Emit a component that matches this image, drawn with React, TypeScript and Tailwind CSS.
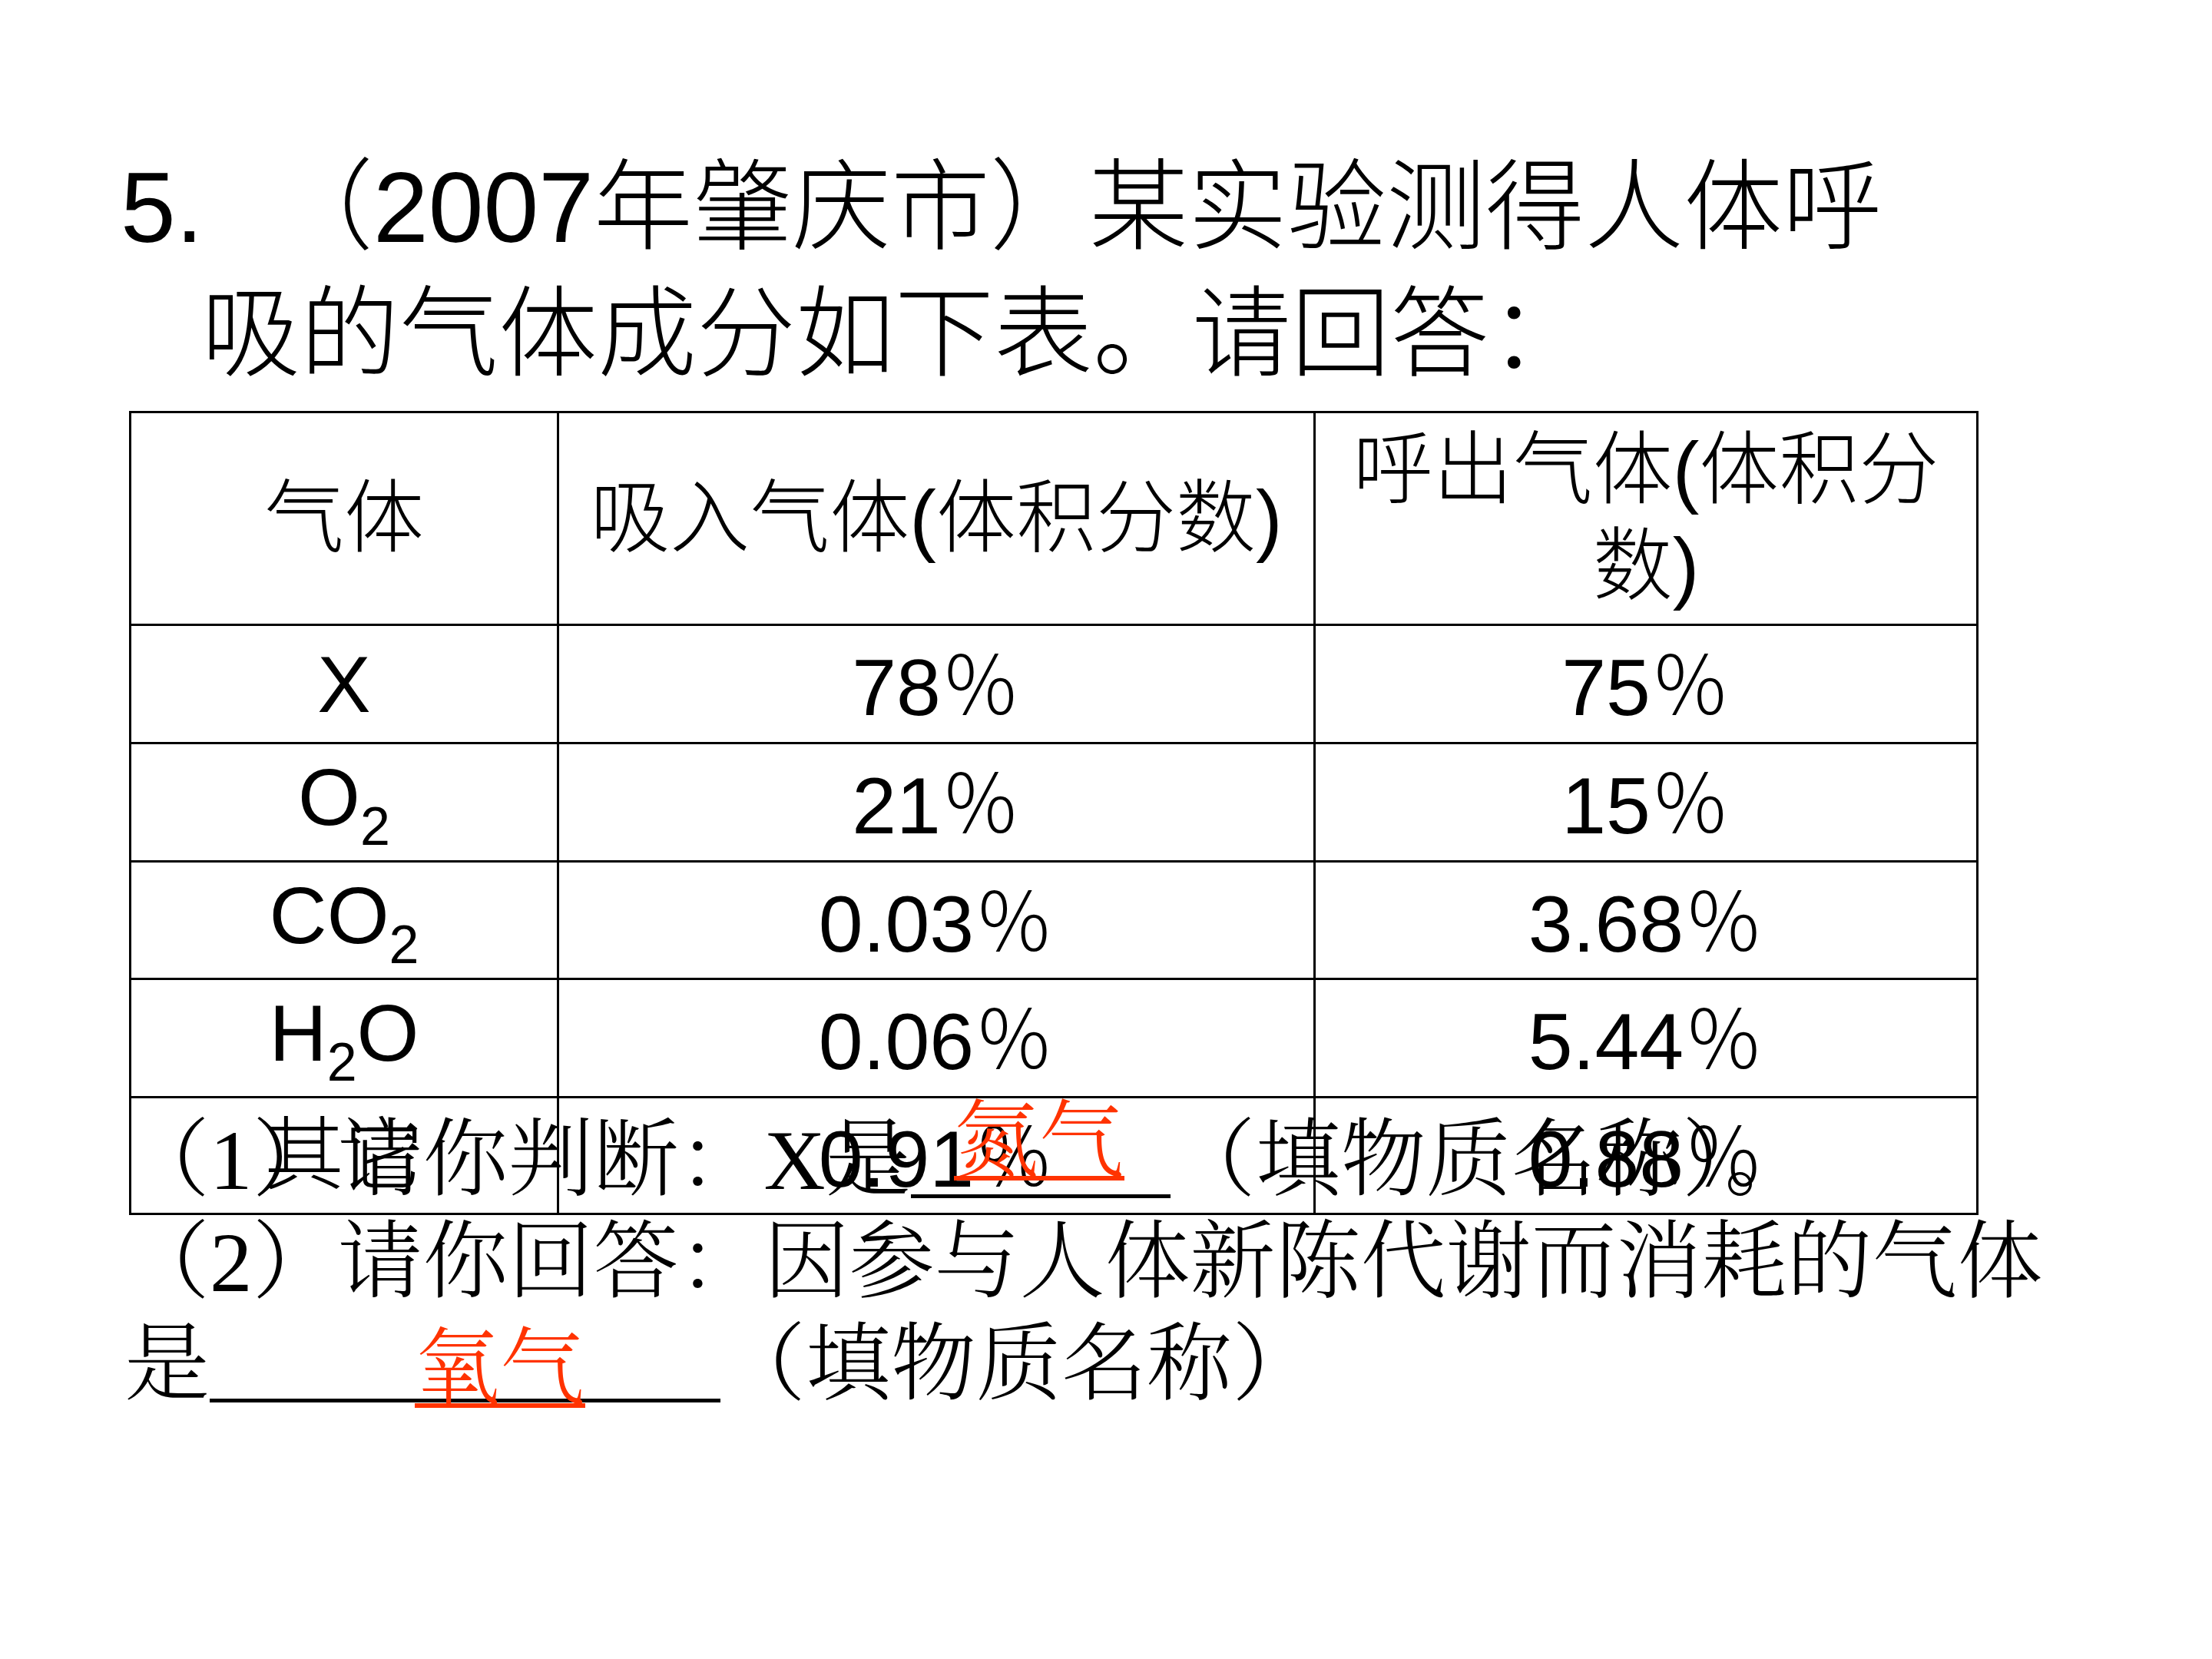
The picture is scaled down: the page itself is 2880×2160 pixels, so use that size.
const sans = "font-['Liberation_Sans','Noto_Sans_CJK_SC',sans-serif]";
const serif = "font-['Liberation_Serif','Noto_Serif_CJK_SC','Noto_Sans_CJK_SC',serif]";

const Pct = ({ v }: { v: string }) => (
  <span>
    {v}
    <span className="font-['Noto_Sans_CJK_SC',sans-serif]">％</span>
  </span>
);

const Sub = ({ children }: { children: string }) => (
  <span className="text-[70px] align-[-26px]">{children}</span>
);

const rows = [
  { gas: <span>X</span>, inhale: '78', exhale: '75', h: 'h-[154px]' },
  { gas: <span>O<Sub>2</Sub></span>, inhale: '21', exhale: '15', h: 'h-[154px]' },
  { gas: <span>CO<Sub>2</Sub></span>, inhale: '0.03', exhale: '3.68', h: 'h-[153px]' },
  { gas: <span>H<Sub>2</Sub>O</span>, inhale: '0.06', exhale: '5.44', h: 'h-[154px]' },
  { gas: <span>其它</span>, inhale: '0.91', exhale: '0.88', h: 'h-[152px]' },
];

const cell = 'flex items-center justify-center text-center border-r-[3px] border-b-[3px] border-black';

export default function App() {
  return (
    <div className={`relative w-[2880px] h-[2160px] bg-white text-black font-light overflow-hidden ${sans}`}>
      {/* title */}
      <div className="pt-[188px] pl-[157px] text-[129px] leading-[165px] whitespace-nowrap">
        <div>
          <span className="inline-block w-[200px]">5.</span>
          （2007年肇庆市）某实验测得人体呼
        </div>
        <div className="pl-[105px]">吸的气体成分如下表。请回答：</div>
      </div>

      {/* table */}
      <div className="mt-[17px] ml-[168px] w-[2408px] border-l-[3px] border-t-[3px] border-black grid grid-cols-[557px_985px_863px] text-[104px]">
        <div className={`${cell} h-[277px]`}>气体</div>
        <div className={`${cell} h-[277px] whitespace-nowrap`}>吸入气体(体积分数)</div>
        <div className={`${cell} h-[277px] px-[29px] leading-[125px]`}>呼出气体(体积分数)</div>
        {rows.map((r, i) => (
          <div key={i} className="contents">
            <div className={`${cell} ${r.h}`}>{r.gas}</div>
            <div className={`${cell} ${r.h}`}>
              <Pct v={r.inhale} />
            </div>
            <div className={`${cell} ${r.h}`}>
              <Pct v={r.exhale} />
            </div>
          </div>
        ))}
      </div>

      {/* questions, laid over the last table row */}
      <div className={`absolute left-[162px] top-[1444px] text-[111px] leading-[133px] whitespace-nowrap ${serif}`}>
        <div>
          （1）请你判断：X是
          <span className="relative inline-block w-[338px] h-[5px] bg-black align-[-12px]">
            <span className="absolute left-[56px] bottom-[23px] leading-[110px] border-b-[6px] border-[#ff3300] text-[#ff3300] font-['Noto_Serif_CJK_SC','Noto_Sans_CJK_SC',serif]">
              氮气
            </span>
          </span>
          （填物质名称）。
        </div>
        <div>（2）请你回答：因参与人体新陈代谢而消耗的气体</div>
        <div>
          是
          <span className="relative inline-block w-[665px] h-[5px] bg-black align-[-12px]">
            <span className="absolute left-[267px] bottom-[-7px] leading-[110px] border-b-[6px] border-[#ff3300] text-[#ff3300] font-['Noto_Serif_CJK_SC','Noto_Sans_CJK_SC',serif]">
              氧气
            </span>
          </span>
          （填物质名称）
        </div>
      </div>
    </div>
  );
}
